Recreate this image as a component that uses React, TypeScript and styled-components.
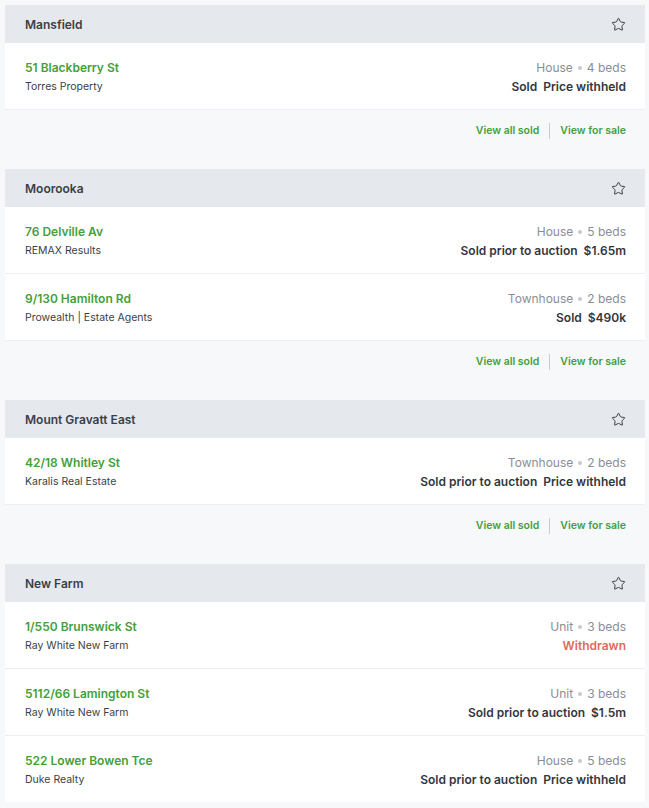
import React from 'react'
import styled, { createGlobalStyle } from 'styled-components'
import { Star } from 'lucide-react'

const GlobalStyle = createGlobalStyle`
  body {
    margin: 0;
    background: #f7f8fa;
    font-family: Inter, 'Noto Sans', 'Liberation Sans', sans-serif;
  }
`

type Listing = {
  address: string
  agent: string
  type: string
  beds: number
  status: string
  price?: string
  withdrawn?: boolean
}

type Suburb = {
  name: string
  listings: Listing[]
  links?: boolean
}

const suburbs: Suburb[] = [
  {
    name: 'Mansfield',
    links: true,
    listings: [
      { address: '51 Blackberry St', agent: 'Torres Property', type: 'House', beds: 4, status: 'Sold', price: 'Price withheld' },
    ],
  },
  {
    name: 'Moorooka',
    links: true,
    listings: [
      { address: '76 Delville Av', agent: 'REMAX Results', type: 'House', beds: 5, status: 'Sold prior to auction', price: '$1.65m' },
      { address: '9/130 Hamilton Rd', agent: 'Prowealth | Estate Agents', type: 'Townhouse', beds: 2, status: 'Sold', price: '$490k' },
    ],
  },
  {
    name: 'Mount Gravatt East',
    links: true,
    listings: [
      { address: '42/18 Whitley St', agent: 'Karalis Real Estate', type: 'Townhouse', beds: 2, status: 'Sold prior to auction', price: 'Price withheld' },
    ],
  },
  {
    name: 'New Farm',
    listings: [
      { address: '1/550 Brunswick St', agent: 'Ray White New Farm', type: 'Unit', beds: 3, status: 'Withdrawn', withdrawn: true },
      { address: '5112/66 Lamington St', agent: 'Ray White New Farm', type: 'Unit', beds: 3, status: 'Sold prior to auction', price: '$1.5m' },
      { address: '522 Lower Bowen Tce', agent: 'Duke Realty', type: 'House', beds: 5, status: 'Sold prior to auction', price: 'Price withheld' },
    ],
  },
]

const Page = styled.div`
  padding: 5px 4px 0 5px;
  display: flex;
  flex-direction: column;
`

const Section = styled.section`
  display: flex;
  flex-direction: column;
`

const Header = styled.div`
  height: 38px;
  background: #e5e8ec;
  display: flex;
  align-items: center;
  justify-content: space-between;
  padding: 0 19px 0 20px;
  color: #3a3f47;
  font-size: 12px;
  font-weight: 600;
`

const StarIcon = styled(Star)`
  color: #3a3f47;
`

const Rows = styled.div`
  background: #fff;
  display: flex;
  flex-direction: column;
`

const Row = styled.div`
  height: 66px;
  box-sizing: content-box;
  display: flex;
  justify-content: space-between;
  align-items: center;
  padding: 0 19px 0 20px;
  border-top: 1px solid #eceef1;

  &:first-child {
    border-top: none;
  }
`

const Col = styled.div<{ $right?: boolean }>`
  display: flex;
  flex-direction: column;
  gap: 3px;
  padding-top: 3px;
  align-items: ${(p) => (p.$right ? 'flex-end' : 'flex-start')};
`

const Address = styled.div`
  color: #44a03a;
  font-size: 12px;
  font-weight: 600;
  line-height: 16px;
`

const Agent = styled.div`
  color: #3a3f47;
  font-size: 10.5px;
  line-height: 16px;
`

const Meta = styled.div`
  color: #8a8e94;
  font-size: 12px;
  line-height: 16px;
  display: flex;
  align-items: center;
  gap: 5px;
`

const Dot = styled.span`
  width: 4px;
  height: 4px;
  border-radius: 50%;
  background: #c7cace;
`

const Status = styled.div<{ $withdrawn?: boolean }>`
  color: ${(p) => (p.$withdrawn ? '#e2685c' : '#33373d')};
  font-size: 12px;
  font-weight: 600;
  line-height: 16px;
  display: flex;
  gap: 6px;
`

const Footer = styled.div`
  height: 60px;
  box-sizing: border-box;
  padding: 13px 19px 0 20px;
  display: flex;
  justify-content: flex-end;
  align-items: flex-start;
  border-top: 1px solid #eceef1;
`

const Link = styled.a`
  color: #44a03a;
  font-size: 10.5px;
  font-weight: 600;
  line-height: 16px;
  text-decoration: none;
  cursor: pointer;
`

const Divider = styled.span`
  width: 1px;
  height: 16px;
  background: #c9ccd0;
  margin: 0 10px;
`

const App = () => (
  <>
    <GlobalStyle />
    <Page>
      {suburbs.map((suburb) => (
        <Section key={suburb.name}>
          <Header>
            <span>{suburb.name}</span>
            <StarIcon size={15} strokeWidth={1.6} />
          </Header>
          <Rows>
            {suburb.listings.map((l) => (
              <Row key={l.address}>
                <Col>
                  <Address>{l.address}</Address>
                  <Agent>{l.agent}</Agent>
                </Col>
                <Col $right>
                  <Meta>
                    {l.type}
                    <Dot />
                    {l.beds} beds
                  </Meta>
                  <Status $withdrawn={l.withdrawn}>
                    <span>{l.status}</span>
                    {l.price && <span>{l.price}</span>}
                  </Status>
                </Col>
              </Row>
            ))}
          </Rows>
          {suburb.links && (
            <Footer>
              <Link>View all sold</Link>
              <Divider />
              <Link>View for sale</Link>
            </Footer>
          )}
        </Section>
      ))}
    </Page>
  </>
)

export default App
